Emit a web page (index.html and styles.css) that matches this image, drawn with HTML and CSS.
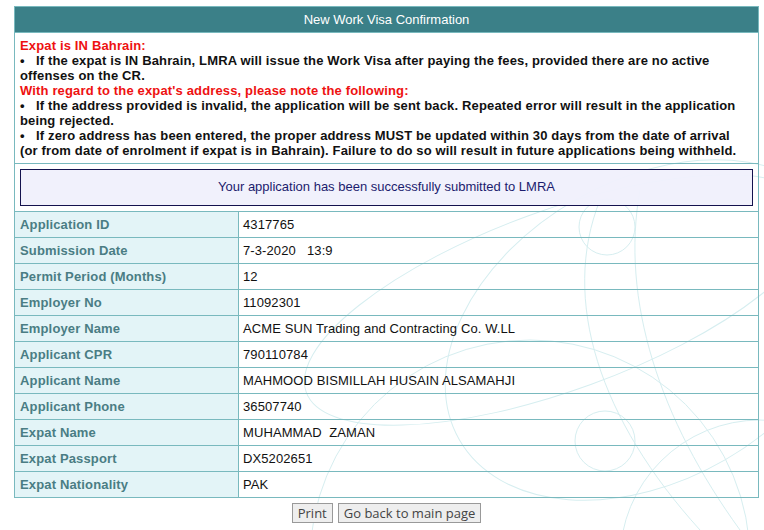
FILE: index.html
```html
<!DOCTYPE html>
<html>
<head>
<meta charset="utf-8">
<link rel="stylesheet" href="styles.css">
</head>
<body>
<svg class="bg-deco" width="764" height="530" viewBox="0 0 764 530">
  <g fill="none" stroke="#d6eef0" stroke-width="1">
    <circle cx="607" cy="227" r="28"/>
    <circle cx="605" cy="441" r="30"/>
    <ellipse cx="650" cy="330" rx="220" ry="150" transform="rotate(-30 650 330)"/>
    <ellipse cx="560" cy="300" rx="270" ry="90" transform="rotate(-20 560 300)"/>
    <circle cx="530" cy="560" r="220"/>
    <circle cx="760" cy="560" r="140"/>
    <path d="M600 200 C 560 300, 600 420, 700 530"/>
    <path d="M640 190 C 620 300, 660 420, 740 530"/>
  </g>
</svg>
<div class="page">
  <table class="panel">
    <tr><th colspan="2" class="title">New Work Visa Confirmation</th></tr>
    <tr>
      <td colspan="2" class="notice">
        <div class="red">Expat is IN Bahrain:</div>
        <div>&bull;&nbsp;&nbsp;&nbsp;If the expat is IN Bahrain, LMRA will issue the Work Visa after paying the fees, provided there are no active offenses on the CR.</div>
        <div class="red">With regard to the expat's address, please note the following:</div>
        <div>&bull;&nbsp;&nbsp;&nbsp;If the address provided is invalid, the application will be sent back. Repeated error will result in the application being rejected.</div>
        <div>&bull;&nbsp;&nbsp;&nbsp;If zero address has been entered, the proper address MUST be updated within 30 days from the date of arrival (or from date of enrolment if expat is in Bahrain). Failure to do so will result in future applications being withheld.</div>
      </td>
    </tr>
    <tr>
      <td colspan="2" class="msg-cell"><div class="msg">Your application has been successfully submitted to LMRA</div></td>
    </tr>
    <tr><td class="lbl">Application ID</td><td class="val">4317765</td></tr>
    <tr><td class="lbl">Submission Date</td><td class="val">7-3-2020&nbsp;&nbsp;&nbsp;13:9</td></tr>
    <tr><td class="lbl">Permit Period (Months)</td><td class="val">12</td></tr>
    <tr><td class="lbl">Employer No</td><td class="val">11092301</td></tr>
    <tr><td class="lbl">Employer Name</td><td class="val">ACME SUN Trading and Contracting Co. W.LL</td></tr>
    <tr><td class="lbl">Applicant CPR</td><td class="val">790110784</td></tr>
    <tr><td class="lbl">Applicant Name</td><td class="val">MAHMOOD BISMILLAH HUSAIN ALSAMAHJI</td></tr>
    <tr><td class="lbl">Applicant Phone</td><td class="val">36507740</td></tr>
    <tr><td class="lbl">Expat Name</td><td class="val">MUHAMMAD&nbsp; ZAMAN</td></tr>
    <tr><td class="lbl">Expat Passport</td><td class="val">DX5202651</td></tr>
    <tr><td class="lbl">Expat Nationality</td><td class="val">PAK</td></tr>
  </table>
  <div class="actions">
    <button class="btn">Print</button>
    <button class="btn">Go back to main page</button>
  </div>
</div>
</body>
</html>
```
FILE: styles.css
```css
html, body {
  margin: 0;
  padding: 0;
  background: #ffffff;
}
body {
  position: relative;
  width: 764px;
  height: 530px;
  overflow: hidden;
  font-family: "Liberation Sans", Arial, sans-serif;
  font-size: 13px;
}
.bg-deco {
  position: absolute;
  left: 0;
  top: 0;
  z-index: 0;
}
.page {
  position: relative;
  z-index: 1;
  padding: 6px 0 0 14px;
  width: 745px;
}
.panel {
  width: 745px;
  border-collapse: collapse;
  border: 1px solid #79b9be;
}
.panel td, .panel th {
  border: 1px solid #79b9be;
  padding: 0;
}
.title {
  background: #3b8088;
  color: #ffffff;
  font-weight: normal;
  height: 25px;
  text-align: center;
  font-size: 13px;
}
.notice {
  padding: 5px 11px 5px 5px !important;
  font-weight: bold;
  color: #111;
  line-height: 15px;
  letter-spacing: 0.15px;
}
.red {
  color: #ee1111;
}
.msg-cell {
  padding: 5px !important;
}
.msg {
  border: 1px solid #14124e;
  background: rgba(240, 240, 252, 0.95);
  color: #1c1c6e;
  text-align: center;
  height: 35px;
  line-height: 34px;
}
.lbl {
  width: 218px;
  height: 25px;
  padding-left: 5px !important;
  background: rgba(224, 243, 246, 0.9);
  color: #4a7d84;
  font-weight: bold;
  letter-spacing: 0.15px;
}
.val {
  padding-left: 4px !important;
  color: #111;
  letter-spacing: 0.1px;
}
.actions {
  display: flex;
  justify-content: center;
  gap: 5px;
  margin-top: 5px;
}
.btn {
  font-family: "Open Sans", sans-serif;
  font-size: 13px;
  color: #444;
  background: #eeeeee;
  border: 1px solid #999;
  padding: 0 5px;
  height: 20px;
  line-height: 18px;
}
```
